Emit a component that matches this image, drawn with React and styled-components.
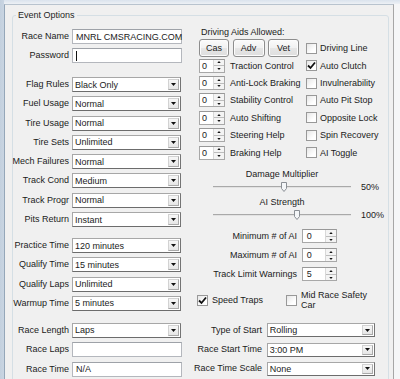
import React from "react";
import styled, { createGlobalStyle } from "styled-components";

const GlobalStyle = createGlobalStyle`
  html, body { margin: 0; padding: 0; }
  body {
    width: 400px;
    height: 379px;
    overflow: hidden;
    background: #f5f6f7;
    font-family: "Liberation Sans", Arial, sans-serif;
    font-size: 9px;
    color: #1b1b1b;
  }
`;

const Frame = styled.div`
  width: 400px;
  height: 379px;
  box-sizing: border-box;
  padding: 4px 0 0 4px;
  background:
    linear-gradient(to right, #c3d0de 0, #c9d5e2 4px, transparent 4px),
    linear-gradient(#dae3ed, #edf1f5 4px, #f5f6f7 4px);
`;

const Panel = styled.div`
  width: 390px;
  height: 100%;
  box-sizing: border-box;
  background: #f0f0f0;
  border-left: 1px solid #95a7b9;
  border-top: 1px solid #b8c3ce;
  border-right: 1px solid #a6a6a6;
  overflow: hidden;
`;

const GroupBox = styled.fieldset`
  margin: 5px 0 0 7px;
  padding: 0;
  width: 377px;
  height: 420px;
  box-sizing: border-box;
  border: 1px solid #d5dfe5;
  border-radius: 3px;
  min-width: 0;
`;

const Legend = styled.legend`
  margin-left: 3px;
  padding: 0 2px;
  line-height: 11px;
  color: #1e1e1e;
`;

const Columns = styled.div`
  display: flex;
  align-items: flex-start;
`;

const LeftColumn = styled.div`
  width: 169px;
  padding-top: 8px;
  display: flex;
  flex-direction: column;
`;

const RowGroup = styled.div`
  display: flex;
  flex-direction: column;
  gap: ${(p) => p.$gap || 4.3}px;
  margin-top: ${(p) => p.$top || 0}px;
`;

const FieldRow = styled.div`
  display: grid;
  grid-template-columns: ${(p) => p.$label}px ${(p) => p.$field}px;
  column-gap: ${(p) => p.$gap}px;
  align-items: center;
  height: ${(p) => p.$h}px;
`;

const Label = styled.span`
  display: flex;
  justify-content: flex-end;
  white-space: nowrap;
  line-height: 11px;
`;

const TextBox = styled.div`
  height: 15px;
  box-sizing: border-box;
  border: 1px solid #b4b7bd;
  border-top-color: #9ea2a8;
  background: #fff;
  display: flex;
  align-items: center;
  padding-left: 3px;
  white-space: nowrap;
`;

const Caret = styled.span`
  width: 1px;
  height: 10px;
  background: #111;
`;

const SelectBox = styled.div`
  height: ${(p) => p.$h}px;
  box-sizing: border-box;
  border: 1px solid;
  border-color: #a7a7a7 #747474 #6c6c6c #a7a7a7;
  background: #fff;
  display: flex;
  align-items: stretch;
`;

const SelectText = styled.span`
  flex: 1;
  display: flex;
  align-items: center;
  padding-left: 2px;
  white-space: nowrap;
  overflow: hidden;
`;

const DropButton = styled.span`
  width: 11px;
  margin: 1px;
  box-sizing: border-box;
  border: 1px solid #d2d2d2;
  border-right-color: #a9a9a9;
  border-bottom-color: #a9a9a9;
  background: linear-gradient(#f7f7f7, #e6e6e6);
  display: flex;
  align-items: center;
  justify-content: center;
`;

const RightColumn = styled.div`
  width: 188px;
  margin-left: 15px;
  padding-top: 5.5px;
  display: flex;
  flex-direction: column;
`;

const AidsTitle = styled.div`
  line-height: 11px;
  padding-left: 4px;
`;

const AidsGrid = styled.div`
  margin-top: 1.5px;
  padding-left: 2px;
  display: grid;
  grid-template-columns: 107px 1fr;
  grid-template-rows: 18px repeat(6, 17.4px);
  align-items: center;
`;

const ButtonRow = styled.div`
  display: flex;
  gap: 3.5px;
  height: 18px;
`;

const PushButton = styled.button`
  width: ${(p) => p.$w}px;
  height: 18px;
  padding: 0;
  font: inherit;
  color: inherit;
  border: 1px solid #8d8d8d;
  border-radius: 3px;
  background: linear-gradient(#fbfbfb, #f1f1f1 50%, #e6e6e6 50%, #dedede);
  box-shadow: inset 0 0 0 1px #fcfcfc;
`;

const SpinRow = styled.div`
  display: flex;
  align-items: center;
  gap: 5px;
  white-space: nowrap;
`;

const SpinBox = styled.div`
  width: ${(p) => p.$w}px;
  height: 14px;
  box-sizing: border-box;
  border: 1px solid #a8a8a8;
  border-top-color: #989898;
  background: #fff;
  display: flex;
  align-items: stretch;
`;

const SpinValue = styled.span`
  flex: 1;
  display: flex;
  align-items: center;
  padding-left: ${(p) => p.$pad}px;
`;

const SpinArrows = styled.span`
  width: 10px;
  display: flex;
  flex-direction: column;
  border-left: 1px solid #d8d8d8;
  background: #f4f4f4;
`;

const SpinHalf = styled.span`
  flex: 1;
  display: flex;
  align-items: center;
  justify-content: center;
  & + & {
    border-top: 1px solid #bdbdbd;
  }
`;

const CheckItem = styled.label`
  display: flex;
  align-items: center;
  gap: ${(p) => p.$gap || 3}px;
  white-space: nowrap;
  width: ${(p) => (p.$w ? `${p.$w}px` : "auto")};
`;

const CheckBox = styled.span`
  width: 11px;
  height: 11px;
  flex: none;
  box-sizing: border-box;
  border: 1px solid #989898;
  background: linear-gradient(135deg, #e6e6e6, #ffffff 70%);
  display: flex;
  align-items: center;
  justify-content: center;
`;

const WrapText = styled.span`
  white-space: normal;
  width: 70px;
  line-height: 10px;
`;

const SliderSection = styled.div`
  margin-top: 8px;
  padding-left: 16px;
  display: flex;
  flex-direction: column;
  gap: 3px;
`;

const SliderGroup = styled.div`
  display: grid;
  grid-template-columns: 138px auto;
  grid-template-rows: 11px 14px;
  column-gap: 10px;
  align-items: center;
`;

const SliderCaption = styled.span`
  text-align: center;
  line-height: 11px;
  white-space: nowrap;
`;

const Track = styled.div`
  position: relative;
  height: 14px;
  &::before {
    content: "";
    position: absolute;
    left: 0;
    right: 0;
    top: 6px;
    height: 1px;
    background: #a9a9a9;
    border-bottom: 1px solid #e2e2e2;
  }
`;

const Thumb = styled.svg`
  position: absolute;
  top: 2px;
  margin-left: -3px;
`;

const SpinSection = styled.div`
  margin-top: 7px;
  display: flex;
  flex-direction: column;
  gap: 5px;
`;

const CheckRow = styled.div`
  margin-top: 8px;
  height: 22px;
  display: flex;
  align-items: center;
`;

const StartSection = styled.div`
  margin-top: 12px;
  margin-left: -1px;
`;

function Triangle({ up, w = 5, h = 3 }) {
  return (
    <svg width={w} height={h} viewBox="0 0 5 3">
      <polygon points={up ? "0,3 5,3 2.5,0" : "0,0 5,0 2.5,3"} fill="#111" />
    </svg>
  );
}

function Select({ value, h = 15 }) {
  return (
    <SelectBox $h={h}>
      <SelectText>{value}</SelectText>
      <DropButton>
        <Triangle />
      </DropButton>
    </SelectBox>
  );
}

function Spinner({ value, w = 26, pad = 2 }) {
  return (
    <SpinBox $w={w}>
      <SpinValue $pad={pad}>{value}</SpinValue>
      <SpinArrows>
        <SpinHalf>
          <Triangle up w={4} h={2} />
        </SpinHalf>
        <SpinHalf>
          <Triangle w={4} h={2} />
        </SpinHalf>
      </SpinArrows>
    </SpinBox>
  );
}

function Check({ checked, children, w, gap }) {
  return (
    <CheckItem $w={w} $gap={gap}>
      <CheckBox>
        {checked && (
          <svg width="9" height="9" viewBox="0 0 9 9">
            <path d="M1 4.5 L3.5 7 L8 1.5" stroke="#111" strokeWidth="1.8" fill="none" />
          </svg>
        )}
      </CheckBox>
      {children}
    </CheckItem>
  );
}

function Slider({ caption, value, pct }) {
  return (
    <SliderGroup>
      <SliderCaption>{caption}</SliderCaption>
      <span />
      <Track>
        <Thumb width="6" height="10" viewBox="0 0 6 10" style={{ left: `${pct}%` }}>
          <path d="M0.5 0.5 H5.5 V6.5 L3 9.5 L0.5 6.5 Z" fill="#f4f6f8" stroke="#8a8f95" />
        </Thumb>
      </Track>
      <span>{value}</span>
    </SliderGroup>
  );
}

const leftSelects1 = [
  ["Flag Rules", "Black Only"],
  ["Fuel Usage", "Normal"],
  ["Tire Usage", "Normal"],
  ["Tire Sets", "Unlimited"],
  ["Mech Failures", "Normal"],
  ["Track Cond", "Medium"],
  ["Track Progr", "Normal"],
  ["Pits Return", "Instant"],
];

const leftSelects2 = [
  ["Practice Time", "120 minutes"],
  ["Qualify Time", "15 minutes"],
  ["Qualify Laps", "Unlimited"],
  ["Warmup Time", "5 minutes"],
];

const aids = [
  ["Traction Control", "Auto Clutch", true],
  ["Anti-Lock Braking", "Invulnerability", false],
  ["Stability Control", "Auto Pit Stop", false],
  ["Auto Shifting", "Opposite Lock", false],
  ["Steering Help", "Spin Recovery", false],
  ["Braking Help", "AI Toggle", false],
];

const aiSpins = [
  ["Minimum # of AI", "0"],
  ["Maximum # of AI", "0"],
  ["Track Limit Warnings", "5"],
];

const starts = [
  ["Type of Start", "Rolling"],
  ["Race Start Time", "3:00 PM"],
  ["Race Time Scale", "None"],
];

export default function App() {
  return (
    <>
      <GlobalStyle />
      <Frame>
        <Panel>
          <GroupBox>
            <Legend>Event Options</Legend>
            <Columns>
              <LeftColumn>
                <RowGroup $gap={4}>
                  <FieldRow $label={56} $field={110} $gap={3} $h={15}>
                    <Label>Race Name</Label>
                    <TextBox>MNRL CMSRACING.COM</TextBox>
                  </FieldRow>
                  <FieldRow $label={56} $field={110} $gap={3} $h={15}>
                    <Label>Password</Label>
                    <TextBox>
                      <Caret />
                    </TextBox>
                  </FieldRow>
                </RowGroup>

                <RowGroup $top={14}>
                  {leftSelects1.map(([label, value]) => (
                    <FieldRow key={label} $label={56} $field={109} $gap={3} $h={15}>
                      <Label>{label}</Label>
                      <Select value={value} />
                    </FieldRow>
                  ))}
                </RowGroup>

                <RowGroup $top={11}>
                  {leftSelects2.map(([label, value]) => (
                    <FieldRow key={label} $label={56} $field={109} $gap={3} $h={15}>
                      <Label>{label}</Label>
                      <Select value={value} />
                    </FieldRow>
                  ))}
                </RowGroup>

                <RowGroup $top={12}>
                  <FieldRow $label={56} $field={109} $gap={3} $h={15}>
                    <Label>Race Length</Label>
                    <Select value="Laps" />
                  </FieldRow>
                  <FieldRow $label={56} $field={110} $gap={3} $h={15}>
                    <Label>Race Laps</Label>
                    <TextBox />
                  </FieldRow>
                  <FieldRow $label={56} $field={110} $gap={3} $h={15}>
                    <Label>Race Time</Label>
                    <TextBox>N/A</TextBox>
                  </FieldRow>
                </RowGroup>
              </LeftColumn>

              <RightColumn>
                <AidsTitle>Driving Aids Allowed:</AidsTitle>
                <AidsGrid>
                  <ButtonRow>
                    <PushButton $w={30}>Cas</PushButton>
                    <PushButton $w={32}>Adv</PushButton>
                    <PushButton $w={31}>Vet</PushButton>
                  </ButtonRow>
                  <Check>Driving Line</Check>
                  {aids.map(([spin, check, on]) => (
                    <React.Fragment key={spin}>
                      <SpinRow>
                        <Spinner value="0" />
                        {spin}
                      </SpinRow>
                      <Check checked={on}>{check}</Check>
                    </React.Fragment>
                  ))}
                </AidsGrid>

                <SliderSection>
                  <Slider caption="Damage Multiplier" value="50%" pct={51.5} />
                  <Slider caption="AI Strength" value="100%" pct={61} />
                </SliderSection>

                <SpinSection>
                  {aiSpins.map(([label, value]) => (
                    <FieldRow key={label} $label={100} $field={35} $gap={4.7} $h={14}>
                      <Label>{label}</Label>
                      <Spinner value={value} w={35} pad={4} />
                    </FieldRow>
                  ))}
                </SpinSection>

                <CheckRow>
                  <Check checked w={89} gap={4}>
                    Speed Traps
                  </Check>
                  <Check gap={4}>
                    <WrapText>Mid Race Safety Car</WrapText>
                  </Check>
                </CheckRow>

                <StartSection>
                  <RowGroup $gap={5.3}>
                    {starts.map(([label, value]) => (
                      <FieldRow key={label} $label={66} $field={108} $gap={4.7} $h={14}>
                        <Label>{label}</Label>
                        <Select value={value} h={14} />
                      </FieldRow>
                    ))}
                  </RowGroup>
                </StartSection>
              </RightColumn>
            </Columns>
          </GroupBox>
        </Panel>
      </Frame>
    </>
  );
}
